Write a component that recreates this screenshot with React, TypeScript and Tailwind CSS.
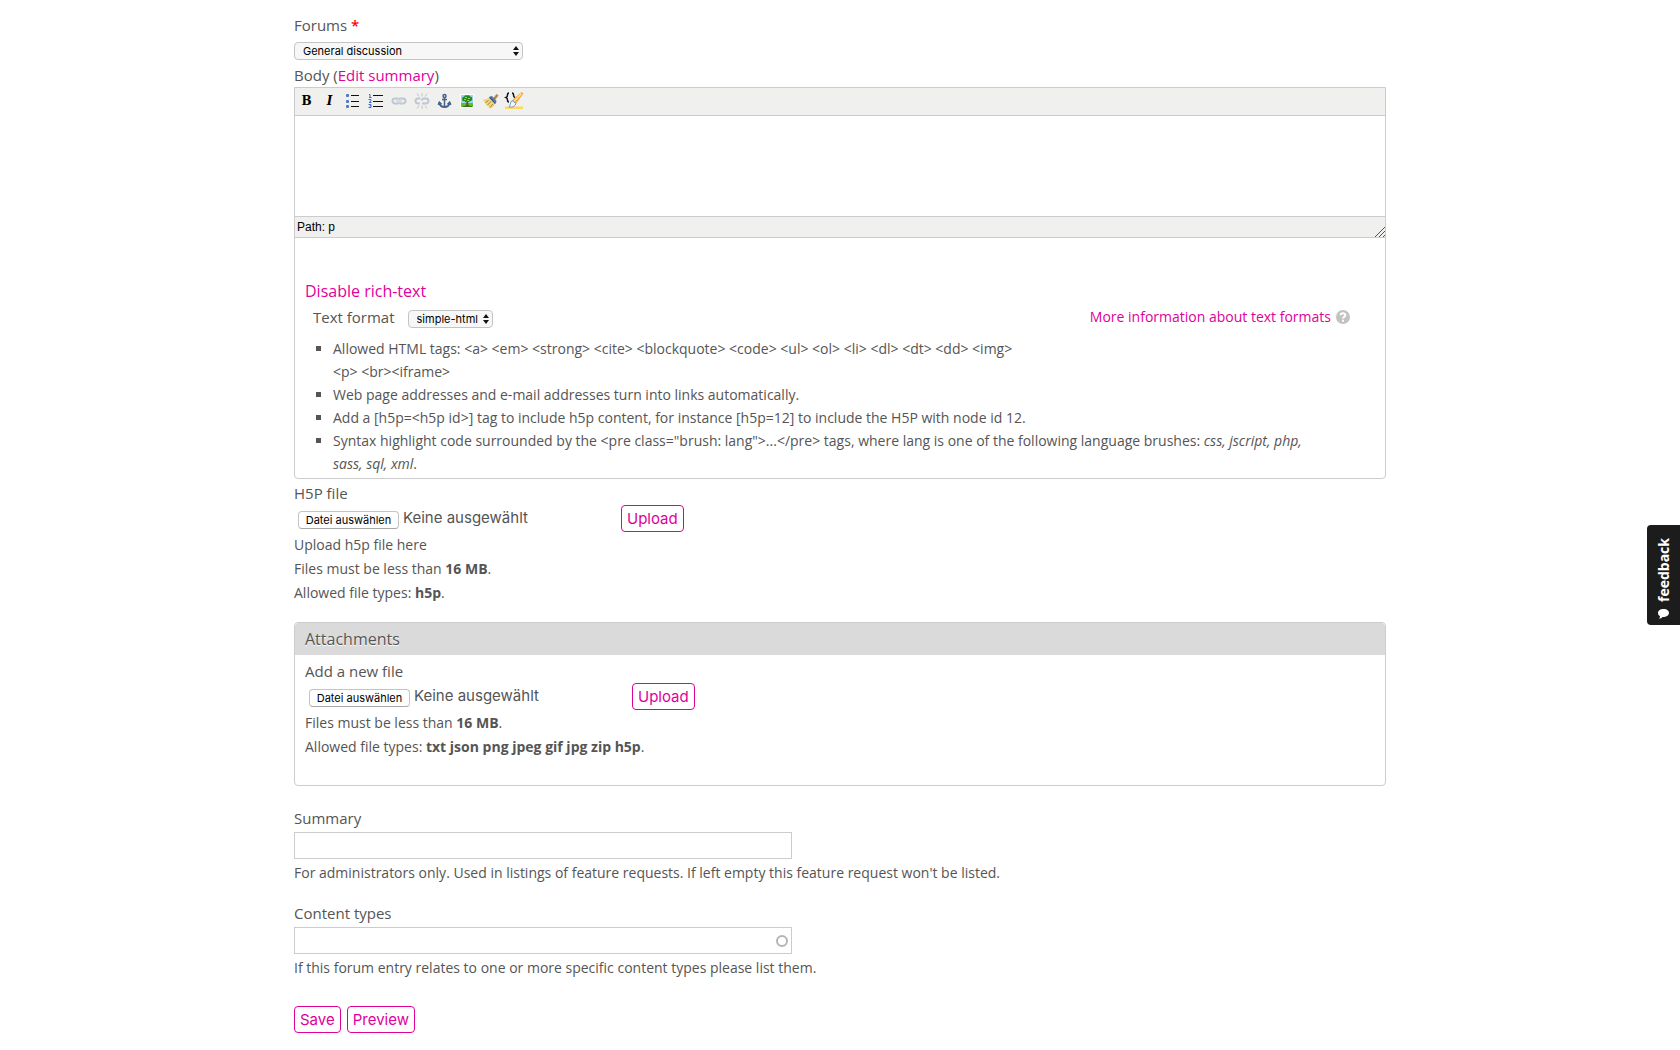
import { useState } from "react";
import type { ReactNode } from "react";

const BulletListIcon = () => (
  <svg className="w-4 h-4" viewBox="0 0 16 16" fill="none">
    <g fill="#4a7ac0">
      <rect x="1" y="1" width="3" height="3" rx="1" />
      <rect x="1" y="7" width="3" height="3" rx="1" />
      <rect x="1" y="12" width="3" height="3" rx="1" />
    </g>
    <path d="M6 2.5h8M6 8.5h8M6 13.5h8" stroke="#111" />
  </svg>
);

const NumberListIcon = () => (
  <svg className="w-4 h-4" viewBox="0 0 16 16" fill="none">
    <path
      d="M1 1.5h1v3M1 4.5h2.5M.5 6.5h2.500v1.500l-2 1.500h2.500M.5 11.500h2.500v3H.5M1.500 13h1.500"
      stroke="#3f6fd0"
    />
    <path d="M5 2.5h10M5 8.5h10M5 13.5h10" stroke="#111" />
  </svg>
);

const LinkIcon = () => (
  <svg className="w-4 h-4" viewBox="0 0 16 16" fill="none" stroke="#bfc6d4" strokeWidth="2">
    <path d="M7 5.5H4a2.5 2.5 0 000 5h3a2 2 0 001.500-1" />
    <path d="M9 10.5h3a2.5 2.5 0 000-5H9a2 2 0 00-1.500 1" />
    <path d="M5 8h6" strokeWidth="1" />
  </svg>
);

const UnlinkIcon = () => (
  <svg className="w-4 h-4" viewBox="0 0 16 16" fill="none" stroke="#bfc6d4" strokeWidth="2">
    <path d="M6.5 5.5H4a2.5 2.5 0 000 5h2" />
    <path d="M8 10.5h4a2.500 2.500 0 000-5h-2a2 2 0 00-2 2" />
    <path
      d="M8 0v3.500M8 12.500V16M3 .5l2 3M13 .5l-2 3M3 15.500l2-3M13 15.500l-2-3"
      stroke="#c4c4c4"
      strokeWidth="1"
    />
  </svg>
);

const AnchorIcon = () => (
  <svg className="w-4 h-4" viewBox="0 0 16 16" fill="none" stroke="#45628c" strokeWidth="1.5">
    <circle cx="7.5" cy="3" r="1.500" />
    <path d="M7.500 4.500v9M5 6.500h5" />
    <path d="M2.500 10c.5 2.800 2.200 4 5 4s4.500-1.200 5-4" strokeWidth="2" />
    <path d="M1 11.500L2.300 8.500 4.500 11zM14 11.500l-1.300-3-2.200 2.500z" fill="#45628c" strokeWidth="1" />
  </svg>
);

const ImageIcon = () => (
  <svg className="w-4 h-4" viewBox="0 0 16 16">
    <rect x="0" y="1" width="14" height="14" fill="#fff" />
    <rect x="1" y="2" width="12" height="9" fill="#9bd3f2" />
    <rect x="1" y="10" width="12" height="4" fill="#62bd2d" />
    <path d="M3 13h9v1H3z" fill="#2b7a19" />
    <path d="M6.500 8h1.500l.3 4 1.700 1H4.500l1.700-1z" fill="#7a4a16" />
    <path
      d="M7 2.500c1.500-.7 3 0 3 1 1.500 0 2.500 1 2 2 .8 1.500-.5 3-2 2.500C9 9.300 8 9 7 8.500 6 9.300 5 9 4.500 8 3 8.500 1.700 7.500 2.300 6 1.700 4.500 3 3.500 4.200 3.700 4.500 2.500 6 2 7 2.500z"
      fill="#268a1a"
    />
    <path d="M5 4h2v1H5zM8 5h2v1H8zM4 6h2v1H4zM7 7h2v1H7z" fill="#8ade3e" />
  </svg>
);

const CleanupIcon = () => (
  <svg className="w-4 h-4" viewBox="0 0 16 16">
    <path d="M10 5.500L13.500 1l2 1.500L12 7z" fill="#b3874c" />
    <path d="M7 3.500l2-.5 4.500 5-.5 2z" fill="#5877a9" />
    <path d="M0 6.500c3 .5 5-1 7-2.500l5.500 6c-1 2.500-2.500 4.500-5 5.500C4.500 13.500 1.500 10.500 0 6.500z" fill="#ecd681" />
    <path d="M2.500 9.500l3-2M4.500 12l3.500-3.500M7 14.500l3-3.500" stroke="#a58333" strokeWidth="1" />
    <path d="M6.500 4l6 6.500" stroke="#38527d" strokeWidth="1.500" />
  </svg>
);

const HighlightIcon = () => (
  <svg className="w-5 h-5 shrink-0" viewBox="0 0 20 20" fill="none">
    <path d="M1 15.500h18V18H1z" fill="#ffd95e" />
    <path
      d="M5 2C3.500 2 3.500 3 3.500 4s0 2-1.500 2.500C3.500 7 3.500 8 3.500 9s0 2 1.500 2M8 2c1.500 0 1.500 1 1.500 2s0 2 1.500 2.500"
      stroke="#111"
      strokeWidth="1.500"
    />
    <path d="M17.500 1l2 1.500-7.500 10-4-3z" fill="#f5a52c" />
    <path d="M17.500 2.500l-7.500 8" stroke="#ffe0a0" strokeWidth="1.500" />
    <path d="M8 9.500l4 3c-1 3-3.500 4-7 3.500 1.500-1.500 1-4.500 3-6.500z" fill="#f2f6fc" stroke="#7697cd" />
  </svg>
);

const ArrowsIcon = () => (
  <svg className="pointer-events-none w-[6px] h-[10px]" viewBox="0 0 6 10" fill="#111">
    <path d="M3 0l3 4H0zM3 10l3-4H0z" />
  </svg>
);

const HelpIcon = () => (
  <svg className="w-[14px] h-[14px]" viewBox="0 0 14 14" fill="none">
    <circle cx="7" cy="7" r="7" fill="#c2c2c2" />
    <path d="M4.700 5.300C4.700 2.700 9.300 2.700 9.300 5.200 9.300 6.900 7 6.800 7 8.600" stroke="#fff" strokeWidth="2" />
    <rect x="6" y="9.700" width="2" height="2" fill="#fff" />
  </svg>
);

const ResizeIcon = () => (
  <svg className="w-[10px] h-[10px]" viewBox="0 0 10 10" stroke="#555">
    <path d="M0 10L10 0M4 10l6-6M8 10l2-2" />
  </svg>
);

const BubbleIcon = () => (
  <svg className="w-[11px] h-[11px]" viewBox="0 0 11 11" fill="#fff">
    <path d="M5.500 1C2.500 1 0 2.500 0 5c0 1.500.8 2.500 2 3.200C2 9.300 1.500 10 .8 10.700c1.700 0 2.900-.7 3.700-1.700C8 9.200 11 7.500 11 5c0-2.500-2.500-4-5.500-4z" />
  </svg>
);

const tools: { name: string; icon: ReactNode; disabled?: boolean }[] = [
  { name: "Bold", icon: <span className="font-['DejaVu_Serif',serif] text-xs font-bold">B</span> },
  { name: "Italic", icon: <span className="font-['DejaVu_Serif',serif] text-xs font-bold italic">I</span> },
  { name: "Unordered list", icon: <BulletListIcon /> },
  { name: "Ordered list", icon: <NumberListIcon /> },
  { name: "Insert link", icon: <LinkIcon />, disabled: true },
  { name: "Unlink", icon: <UnlinkIcon />, disabled: true },
  { name: "Insert anchor", icon: <AnchorIcon /> },
  { name: "Insert image", icon: <ImageIcon /> },
  { name: "Cleanup messy code", icon: <CleanupIcon /> },
  { name: "Highlight code", icon: <HighlightIcon /> },
];

function SmallSelect({ id, options, className }: { id: string; options: string[]; className: string }) {
  return (
    <span className="inline-grid items-center">
      <select
        id={id}
        className={`col-start-1 row-start-1 h-[18px] appearance-none rounded border border-[#c4c4c4] bg-[#f7f7f7] pl-2 font-[Inter,sans-serif] text-[11px] leading-4 text-black ${className}`}
      >
        {options.map((o) => (
          <option key={o}>{o}</option>
        ))}
      </select>
      <span className="pointer-events-none col-start-1 row-start-1 mr-1 justify-self-end">
        <ArrowsIcon />
      </span>
    </span>
  );
}

function PinkButton({ children, type = "button" }: { children: ReactNode; type?: "button" | "submit" }) {
  return (
    <button
      type={type}
      className="h-[27px] rounded border border-[#e0009b] bg-white px-[5px] font-[Inter,sans-serif] text-[15px] leading-6 text-[#e0009b] hover:bg-pink-50"
    >
      {children}
    </button>
  );
}

function FileRow({ id }: { id: string }) {
  const [fileName, setFileName] = useState("");
  return (
    <div className="flex items-start">
      <div className="relative flex w-[327px] items-start pl-1">
        <input
          id={id}
          type="file"
          className="sr-only"
          onChange={(e) => setFileName(e.target.files?.[0]?.name ?? "")}
        />
        <label
          htmlFor={id}
          className="mt-[6px] h-[18px] w-[101px] rounded border border-[#c4c4c4] border-b-[#a8a8a8] bg-white text-center font-[Inter,sans-serif] text-[11px] leading-4 text-black"
        >
          Datei auswählen
        </label>
        <span className="ml-1 font-[Inter,sans-serif] text-[15px] leading-[26px]">
          {fileName || "Keine ausgewählt"}
        </span>
      </div>
      <PinkButton>Upload</PinkButton>
    </div>
  );
}

export default function App() {
  return (
    <div className="font-['Open_Sans',sans-serif] text-[15px] leading-6 text-[#555]">
      <form className="mx-auto w-[65%] pt-[13px] pb-4" onSubmit={(e) => e.preventDefault()}>
        <label htmlFor="forums" className="block">
          Forums <span className="font-semibold text-[#f00]">*</span>
        </label>
        <div className="flex h-[26px] items-center pt-[2px]">
          <SmallSelect id="forums" options={["General discussion"]} className="w-[229px]" />
        </div>

        <div>
          <label htmlFor="body">Body</label> (
          <a href="#summary" className="text-[#e0009b]">Edit summary</a>)
        </div>
        <div className="rounded-b border border-[#ccc]">
          <div className="flex h-[28px] items-center border-b border-[#ccc] bg-[#f0f0ee] pb-[2px]">
            {tools.map((t) => (
              <button
                key={t.name}
                type="button"
                title={t.name}
                aria-label={t.name}
                disabled={t.disabled}
                className="flex h-5 w-[23px] shrink-0 items-center justify-center text-black"
              >
                {t.icon}
              </button>
            ))}
          </div>
          <textarea id="body" className="block h-[100px] w-full resize-none p-2 outline-none" />
          <div className="flex h-[22px] items-center justify-between border-y border-[#ccc] bg-[#f0f0ee] pl-[2px]">
            <span className="font-['Liberation_Sans',sans-serif] text-xs text-black">Path: p</span>
            <span className="self-end">
              <ResizeIcon />
            </span>
          </div>

          <div className="px-[10px] pt-[41px] pb-[3px]">
            <a href="#plain" className="text-base leading-6 text-[#e0009b]">Disable rich-text</a>
            <div className="flex h-[28px] items-center justify-between pr-[25px] pl-2">
              <div className="flex items-center gap-[13px]">
                <label htmlFor="format">Text format</label>
                <span className="flex pt-[3px]">
                  <SmallSelect id="format" options={["simple-html"]} className="w-[85px]" />
                </span>
              </div>
              <a href="#formats" className="flex items-center gap-[5px] text-sm text-[#e0009b]">
                More information about text formats
                <HelpIcon />
              </a>
            </div>
            <ul className="mt-[6px] list-[square] pr-14 pl-7 text-sm leading-[23px]">
              <li>
                Allowed HTML tags: &lt;a&gt; &lt;em&gt; &lt;strong&gt; &lt;cite&gt; &lt;blockquote&gt; &lt;code&gt;
                &lt;ul&gt; &lt;ol&gt; &lt;li&gt; &lt;dl&gt; &lt;dt&gt; &lt;dd&gt; &lt;img&gt;
                <br />
                &lt;p&gt; &lt;br&gt;&lt;iframe&gt;
              </li>
              <li>Web page addresses and e-mail addresses turn into links automatically.</li>
              <li>
                Add a [h5p=&lt;h5p id&gt;] tag to include h5p content, for instance [h5p=12] to include the H5P with
                node id 12.
              </li>
              <li>
                Syntax highlight code surrounded by the &lt;pre class="brush: lang"&gt;...&lt;/pre&gt; tags, where lang
                is one of the following language brushes: <em>css, jscript, php,</em> <em>sass, sql, xml</em>.
              </li>
            </ul>
          </div>
        </div>

        <section className="pt-[2px]">
          <p>H5P file</p>
          <FileRow id="h5p-file" />
          <div className="pt-px text-sm leading-6">
            <p>Upload h5p file here</p>
            <p>Files must be less than <strong>16 MB</strong>.</p>
            <p>Allowed file types: <strong>h5p</strong>.</p>
          </div>
        </section>

        <section className="mt-[17px] rounded border border-[#ccc] pb-[26px]">
          <h2 className="rounded-t bg-[#dadada] px-[10px] py-1 text-base leading-6 [text-shadow:0_1px_0_#fff]">
            Attachments
          </h2>
          <div className="px-[10px] pt-1">
            <p>Add a new file</p>
            <FileRow id="attachment" />
            <div className="pt-px text-sm leading-6">
              <p>Files must be less than <strong>16 MB</strong>.</p>
              <p>Allowed file types: <strong>txt json png jpeg gif jpg zip h5p</strong>.</p>
            </div>
          </div>
        </section>

        <div className="mt-5">
          <label htmlFor="summary" className="block">Summary</label>
          <input
            id="summary"
            type="text"
            className="mt-[2px] block h-[27px] w-[498px] border border-[#ccc] px-2 outline-none"
          />
          <p className="mt-[2px] text-sm leading-6">
            For administrators only. Used in listings of feature requests. If left empty this feature request won't be
            listed.
          </p>
        </div>

        <div className="mt-4">
          <label htmlFor="types" className="block">Content types</label>
          <div className="mt-[2px] flex h-[27px] w-[498px] items-center border border-[#ccc] pr-[3px]">
            <input id="types" type="text" className="h-full min-w-0 flex-1 px-2 outline-none" />
            <span className="h-3 w-3 rounded-full border-2 border-[#b5b5b5]" />
          </div>
          <p className="mt-[2px] text-sm leading-6">
            If this forum entry relates to one or more specific content types please list them.
          </p>
        </div>

        <div className="mt-[26px] flex gap-[6px]">
          <PinkButton type="submit">Save</PinkButton>
          <PinkButton>Preview</PinkButton>
        </div>
      </form>

      <button
        type="button"
        className="fixed top-1/2 right-0 flex h-[100px] w-[33px] flex-col items-center justify-end gap-[6px] rounded-l bg-[#1c1c1c] pb-[6px] text-white"
      >
        <span className="rotate-180 text-sm leading-4 font-bold [writing-mode:vertical-rl]">feedback</span>
        <BubbleIcon />
      </button>
    </div>
  );
}
